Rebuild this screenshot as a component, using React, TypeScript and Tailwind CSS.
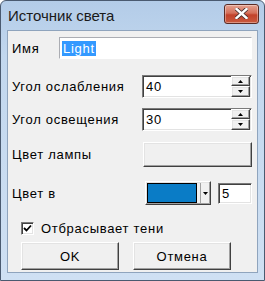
import React from "react";

const sunken =
  "border border-t-[#7a7a7a] border-l-[#7a7a7a] border-r-[#ffffff] border-b-[#ffffff] shadow-[inset_1px_1px_0_#404040,inset_-1px_-1px_0_#e3e3e3] bg-white";
const raised =
  "border border-t-[#ffffff] border-l-[#ffffff] border-r-[#404040] border-b-[#404040] shadow-[inset_-1px_-1px_0_#a0a0a0,inset_1px_1px_0_#e3e3e3] bg-[#f0f0f0]";

function Spin({ value }: { value: string }) {
  return (
    <div className={`ml-auto w-[110px] h-[23px] flex items-center ${sunken}`}>
      <span className="pl-[3px] flex-1 leading-none">{value}</span>
      <div className="flex flex-col w-[19px] h-[21px] mr-[1px]">
        <div className={`h-[10px] flex items-center justify-center ${raised}`}>
          <svg width="5" height="3" viewBox="0 0 5 3">
            <path d="M2.5 0 L5 3 L0 3 Z" fill="#000" />
          </svg>
        </div>
        <div className={`h-[11px] flex items-center justify-center ${raised}`}>
          <svg width="5" height="3" viewBox="0 0 5 3">
            <path d="M0 0 L5 0 L2.5 3 Z" fill="#000" />
          </svg>
        </div>
      </div>
    </div>
  );
}

export default function App() {
  return (
    <div
      className="w-[265px] h-[281px] flex flex-col border border-[#4a5a70] rounded-t-[6px] bg-[linear-gradient(180deg,#b3cce8_0%,#c2d7ee_20%,#cfe0f3_100%)] text-[13px] leading-[15px] tracking-[0.7px] text-black"
      style={{ fontFamily: '"Liberation Sans", sans-serif' }}
    >
      <div className="h-[29px] flex items-center pl-[7px] pr-[5px] shrink-0">
        <span className="text-[15px] tracking-normal text-[#1a1a1a]">Источник света</span>
        <div className="ml-auto mt-[-4px] w-[35px] h-[20px] rounded-[3px] border border-[#5a2b24] bg-[linear-gradient(180deg,#e4a190_0%,#d4705a_45%,#c2422b_55%,#c95a3e_100%)] flex items-center justify-center shadow-[inset_0_0_0_1px_rgba(255,255,255,0.35)]">
          <svg width="13" height="11" viewBox="0 0 13 11">
            <path
              d="M1.5 1 L11.5 10 M11.5 1 L1.5 10"
              stroke="#3a2a2a"
              strokeWidth="4"
              strokeLinecap="square"
            />
            <path
              d="M1.5 1 L11.5 10 M11.5 1 L1.5 10"
              stroke="#ffffff"
              strokeWidth="2.4"
              strokeLinecap="square"
            />
          </svg>
        </div>
      </div>
      <div className="flex-1 mx-[6px] mb-[7px] border border-[#8fa4bd] bg-[#f0f0f0] flex flex-col pl-[4px] pr-[5px]">
        <div className="mt-[6px] h-[22px] flex items-center">
          <span className="w-[47px]">Имя</span>
          <div className={`flex-1 h-[22px] flex items-center ${sunken} border-t-[#abadb3] border-l-[#abadb3] shadow-none`}>
            <span className="ml-[2px] bg-[#3399ff] text-white leading-[15px] px-[1px]">Light</span>
          </div>
        </div>
        <div className="mt-[16px] h-[23px] flex items-center">
          <span>Угол ослабления</span>
          <Spin value="40" />
        </div>
        <div className="mt-[10px] h-[23px] flex items-center">
          <span>Угол освещения</span>
          <Spin value="30" />
        </div>
        <div className="mt-[11px] h-[25px] flex items-center">
          <span>Цвет лампы</span>
          <div className={`ml-auto w-[109px] h-[25px] ${raised} bg-[#e3e3e3]`} />
        </div>
        <div className="mt-[14px] h-[24px] flex items-center">
          <span>Цвет в</span>
          <div className={`ml-auto w-[66px] h-[24px] flex items-center ${raised}`}>
            <div className="ml-[1px] w-[50px] h-[20px] border border-black bg-[#0a7cc6]" />
            <div className="ml-[3px] w-px h-[20px] bg-[#a0a0a0]" />
            <div className="flex-1 flex items-center justify-center">
              <svg width="5" height="3" viewBox="0 0 5 3">
                <path d="M0 0 L5 0 L2.5 3 Z" fill="#000" />
              </svg>
            </div>
          </div>
          <div className={`ml-[7px] w-[34px] h-[21px] flex items-center ${sunken}`}>
            <span className="pl-[3px] leading-none">5</span>
          </div>
        </div>
        <div className="mt-[17px] h-[13px] ml-[9px] flex items-center">
          <div className={`w-[13px] h-[13px] flex items-center justify-center ${sunken}`}>
            <svg width="9" height="9" viewBox="0 0 9 9">
              <path d="M1 4 L3.5 6.5 L8 1.5" stroke="#000" strokeWidth="1.8" fill="none" />
            </svg>
          </div>
          <span className="ml-[7px]">Отбрасывает тени</span>
        </div>
        <div className="mt-[7px] ml-[9px] flex gap-[14px]">
          <div className={`w-[98px] h-[28px] flex items-center justify-center ${raised} border-r-[#000] border-b-[#000]`}>
            OK
          </div>
          <div className={`w-[98px] h-[28px] flex items-center justify-center ${raised}`}>
            Отмена
          </div>
        </div>
      </div>
    </div>
  );
}
